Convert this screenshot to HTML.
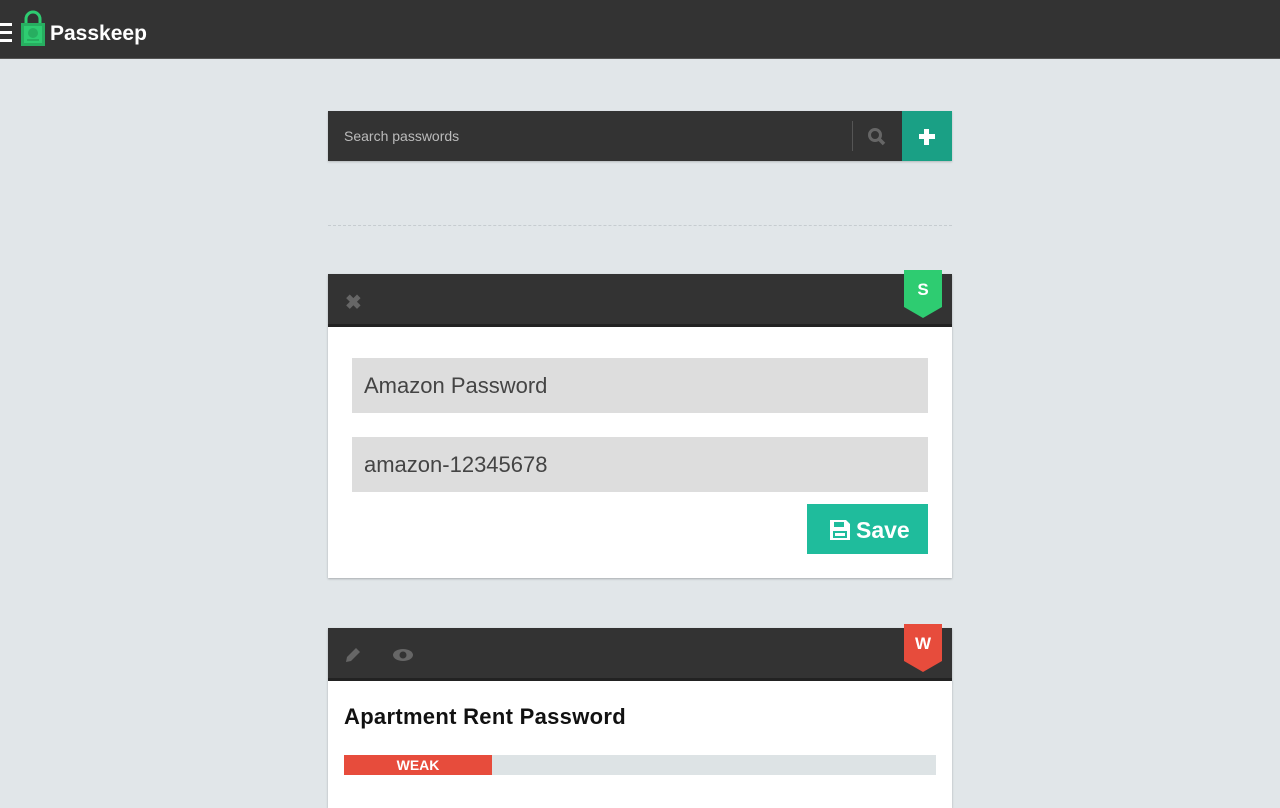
<!DOCTYPE html>
<html><head><style>
*{box-sizing:border-box;margin:0;padding:0}
body{width:1280px;height:800px;overflow:hidden;background:#e1e6e9;font-family:"Liberation Sans",sans-serif;position:relative}
.top{position:absolute;left:0;top:0;width:1280px;height:59px;background:#333;border-bottom:1px solid #555}
.brand{position:absolute;left:50px;top:22px;color:#fff;font-weight:bold;font-size:21px}
.abs{position:absolute}
.search{left:328px;top:111px;width:624px;height:50px;background:#333;box-shadow:0 1px 2px rgba(0,0,0,.2)}
.card{left:328px;width:624px;background:#fff;box-shadow:0 1px 2px rgba(0,0,0,.25)}
.hdr{height:53px;background:#333;border-bottom:3px solid #222;position:relative}
.badge{position:absolute;right:10px;top:-4px;width:38px;height:48px;color:#fff;font-weight:bold;font-size:17px;text-align:center;padding-top:10px;clip-path:polygon(0 0,100% 0,100% 77%,50% 100%,0 77%)}
.inp{position:absolute;left:24px;width:576px;height:55px;background:#ddd;color:#444;font-size:22px;padding:15px 12px}
</style></head><body>
<div class="top">
 <div class="abs" style="left:0;top:23px;width:12px;height:3px;background:#fff"></div>
 <div class="abs" style="left:0;top:31px;width:12px;height:3px;background:#fff"></div>
 <div class="abs" style="left:0;top:39px;width:12px;height:3px;background:#fff"></div>
 <svg class="abs" style="left:20px;top:10px" width="26" height="36" viewBox="0 0 26 36"><path d="M6 14V9a7 7 0 0 1 14 0v5" fill="none" stroke="#2ecc71" stroke-width="3"/><rect x="1" y="13" width="24" height="23" fill="#27ae60"/><rect x="4" y="16" width="18" height="17" fill="#2ecc71"/><circle cx="13" cy="23" r="5" fill="#27ae60"/><rect x="7" y="29" width="12" height="2" fill="#27ae60"/></svg>
 <div class="brand">Passkeep</div>
</div>
<div class="abs search">
 <div class="abs" style="left:16px;top:17px;color:#bbb;font-size:14px">Search passwords</div>
 <div class="abs" style="left:524px;top:10px;width:1px;height:30px;background:#555"></div>
 <svg class="abs" style="left:539px;top:16px" width="20" height="20"><circle cx="8" cy="8" r="5.5" fill="none" stroke="#666" stroke-width="3"/><path d="M12 12l5 5" stroke="#666" stroke-width="3.5"/></svg>
 <div class="abs" style="left:574px;top:0;width:50px;height:50px;background:#1aa085"><div class="abs" style="left:17px;top:23px;width:16px;height:5px;background:#fff"></div><div class="abs" style="left:22px;top:18px;width:5px;height:16px;background:#fff"></div></div>
</div>
<div class="abs" style="left:328px;top:225px;width:624px;border-top:1px dashed #c6ccd0"></div>
<div class="abs card" style="top:274px;height:304px">
 <div class="hdr"><div class="abs" style="left:17px;top:16px;color:#666;font-size:20px;font-weight:bold">✖</div><div class="badge" style="background:#2ecc71">S</div></div>
 <div class="inp" style="top:84px">Amazon Password</div>
 <div class="inp" style="top:163px">amazon-12345678</div>
 <div class="abs" style="left:479px;top:230px;width:121px;height:50px;background:#1fbc9c;color:#fff;font-size:23px;font-weight:bold;padding:13px 0 0 22px">
  <svg style="position:absolute;left:22px;top:15px" width="22" height="22" viewBox="0 0 22 22"><path d="M1 1h16l4 4v16H1z" fill="#fff"/><rect x="5" y="3" width="10" height="5" fill="#1fbc9c"/><rect x="4" y="12" width="14" height="7" fill="#1fbc9c"/><rect x="6" y="14" width="10" height="3" fill="#fff"/></svg>
  <span style="margin-left:27px">Save</span></div>
</div>
<div class="abs card" style="top:628px;height:180px">
 <div class="hdr">
  <svg class="abs" style="left:16px;top:18px" width="18" height="18"><path d="M2 16l1-5 9-9 4 4-9 9z" fill="#666"/></svg>
  <svg class="abs" style="left:64px;top:20px" width="22" height="14"><ellipse cx="11" cy="7" rx="10" ry="6" fill="#666"/><circle cx="11" cy="7" r="3.5" fill="#333"/></svg>
  <div class="badge" style="background:#e74c3c">W</div></div>
 <div class="abs" style="left:16px;top:76px;font-size:22px;font-weight:bold;color:#111;letter-spacing:0.3px">Apartment Rent Password</div>
 <div class="abs" style="left:16px;top:127px;width:592px;height:20px;background:#dde3e5"><div style="width:148px;height:20px;background:#e74c3c;color:#fff;font-size:14px;font-weight:bold;text-align:center;padding-top:2px">WEAK</div></div>
</div>
</body></html>
